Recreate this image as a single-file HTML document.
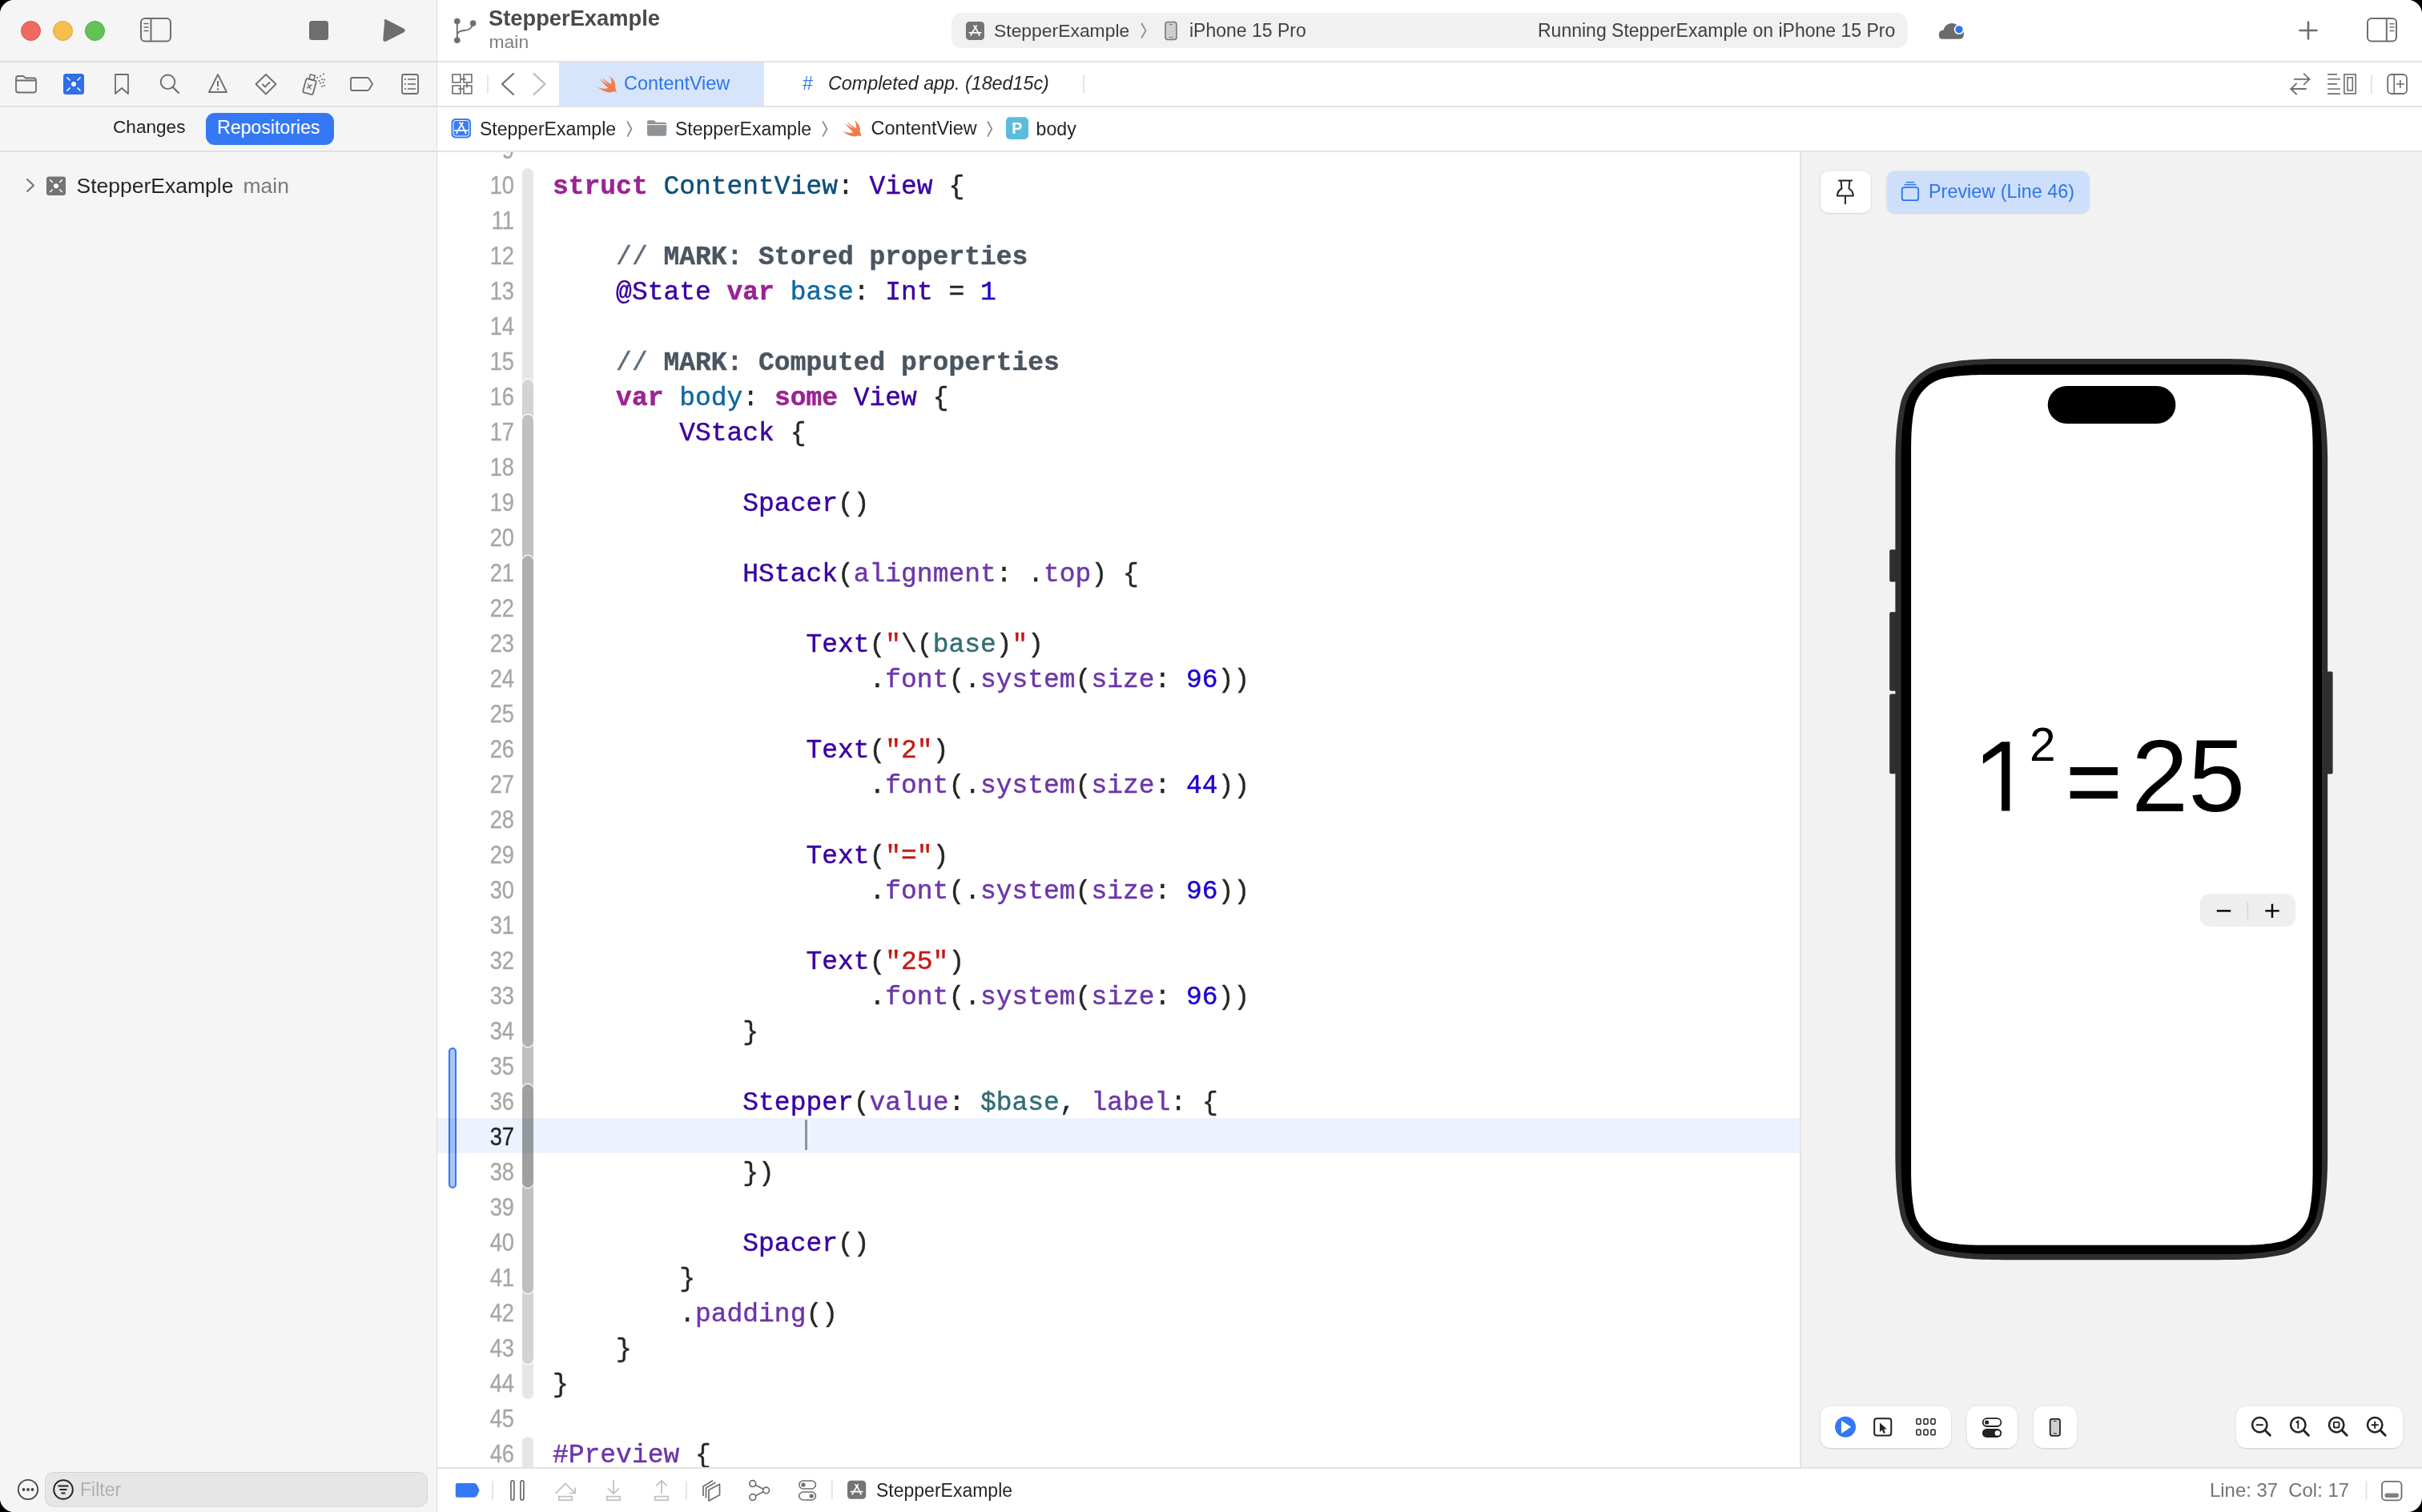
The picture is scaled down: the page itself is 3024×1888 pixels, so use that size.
<!DOCTYPE html>
<html><head><meta charset="utf-8"><title>Xcode</title>
<style>
html,body{margin:0;padding:0;width:3024px;height:1888px;overflow:hidden;background:#000;}
#win{position:absolute;left:0;top:0;width:3024px;height:1888px;border-radius:18px;overflow:hidden;background:#fff;font-family:"Liberation Sans",sans-serif;}
.a{position:absolute;}
.t{position:absolute;white-space:pre;line-height:1;}
svg{position:absolute;overflow:visible;}
.code{position:absolute;left:144px;white-space:pre;font-family:"Liberation Mono",monospace;font-size:32.96px;line-height:44px;height:44px;color:#262626;-webkit-text-stroke:0.45px currentColor;}
.ln{position:absolute;left:0px;width:96px;text-align:right;font-family:"Liberation Sans",sans-serif;font-size:31px;line-height:44px;height:44px;color:#a6a6a6;-webkit-text-stroke:0.35px currentColor;transform:scaleX(0.88);transform-origin:96px 0;}
.k{color:#9b2393;font-weight:bold}
.td{color:#0b4f79}
.od{color:#0f68a0}
.ot{color:#3900a0}
.of{color:#6c36a9}
.ov{color:#326d74}
.n{color:#1c00cf}
.s{color:#c41a16}
.c{color:#5d6c79}
.m{color:#4a5561;font-weight:bold}
</style></head><body><div id="win">

<div class="a" style="left:0;top:0;width:545px;height:1888px;background:#f5f5f5"></div>
<div class="a" style="left:545px;top:0;width:1px;height:1888px;background:#dedede"></div>
<div class="a" style="left:0;top:76px;width:545px;height:2px;background:#e0e0e0"></div>
<div class="a" style="left:0;top:132px;width:545px;height:2px;background:#e0e0e0"></div>
<div class="a" style="left:0;top:188px;width:545px;height:2px;background:#e0e0e0"></div>
<div class="a" style="left:26px;top:26px;width:23px;height:23px;border-radius:50%;background:#ee6a5f;border:0.5px solid #d9534a"></div>
<div class="a" style="left:66px;top:26px;width:23px;height:23px;border-radius:50%;background:#f5bf4f;border:0.5px solid #d9a33d"></div>
<div class="a" style="left:106px;top:26px;width:23px;height:23px;border-radius:50%;background:#61c555;border:0.5px solid #4fa944"></div>
<div class="a" style="left:546px;top:0;width:2478px;height:76px;background:#fff"></div>
<div class="a" style="left:546px;top:76px;width:2478px;height:2px;background:#e3e3e3"></div>
<div class="a" style="left:546px;top:132px;width:2478px;height:2px;background:#e3e3e3"></div>
<div class="a" style="left:546px;top:188px;width:2478px;height:2px;background:#e3e3e3"></div>
<div class="a" style="left:546px;top:190px;width:1701px;height:1642px;background:#fff;overflow:hidden">
<div class="a" style="left:106px;top:19.90px;width:14px;height:1536.70px;background:#e6e6e6;border-radius:7px;box-shadow:0 0 0 1.5px rgba(255,255,255,0.85)"></div>
<div class="a" style="left:106px;top:283.90px;width:14px;height:1228.70px;background:#d3d3d3;border-radius:7px;box-shadow:0 0 0 1.5px rgba(255,255,255,0.85)"></div>
<div class="a" style="left:106px;top:327.90px;width:14px;height:1096.70px;background:#c0c0c0;border-radius:7px;box-shadow:0 0 0 1.5px rgba(255,255,255,0.85)"></div>
<div class="a" style="left:106px;top:503.90px;width:14px;height:612.70px;background:#afafaf;border-radius:7px;box-shadow:0 0 0 1.5px rgba(255,255,255,0.85)"></div>
<div class="a" style="left:106px;top:1163.90px;width:14px;height:128.70px;background:#a0a0a0;border-radius:7px;box-shadow:0 0 0 1.5px rgba(255,255,255,0.85)"></div>
<div class="a" style="left:106px;top:1603.90px;width:14px;height:656.70px;background:#e6e6e6;border-radius:7px;box-shadow:0 0 0 1.5px rgba(255,255,255,0.85)"></div>
<div class="ln" style="top:-23.90px;color:#a6a6a6">9</div>
<div class="ln" style="top:20.10px;color:#a6a6a6">10</div>
<div class="ln" style="top:64.10px;color:#a6a6a6">11</div>
<div class="ln" style="top:108.10px;color:#a6a6a6">12</div>
<div class="ln" style="top:152.10px;color:#a6a6a6">13</div>
<div class="ln" style="top:196.10px;color:#a6a6a6">14</div>
<div class="ln" style="top:240.10px;color:#a6a6a6">15</div>
<div class="ln" style="top:284.10px;color:#a6a6a6">16</div>
<div class="ln" style="top:328.10px;color:#a6a6a6">17</div>
<div class="ln" style="top:372.10px;color:#a6a6a6">18</div>
<div class="ln" style="top:416.10px;color:#a6a6a6">19</div>
<div class="ln" style="top:460.10px;color:#a6a6a6">20</div>
<div class="ln" style="top:504.10px;color:#a6a6a6">21</div>
<div class="ln" style="top:548.10px;color:#a6a6a6">22</div>
<div class="ln" style="top:592.10px;color:#a6a6a6">23</div>
<div class="ln" style="top:636.10px;color:#a6a6a6">24</div>
<div class="ln" style="top:680.10px;color:#a6a6a6">25</div>
<div class="ln" style="top:724.10px;color:#a6a6a6">26</div>
<div class="ln" style="top:768.10px;color:#a6a6a6">27</div>
<div class="ln" style="top:812.10px;color:#a6a6a6">28</div>
<div class="ln" style="top:856.10px;color:#a6a6a6">29</div>
<div class="ln" style="top:900.10px;color:#a6a6a6">30</div>
<div class="ln" style="top:944.10px;color:#a6a6a6">31</div>
<div class="ln" style="top:988.10px;color:#a6a6a6">32</div>
<div class="ln" style="top:1032.10px;color:#a6a6a6">33</div>
<div class="ln" style="top:1076.10px;color:#a6a6a6">34</div>
<div class="ln" style="top:1120.10px;color:#a6a6a6">35</div>
<div class="ln" style="top:1164.10px;color:#a6a6a6">36</div>
<div class="ln" style="top:1208.10px;color:#222">37</div>
<div class="ln" style="top:1252.10px;color:#a6a6a6">38</div>
<div class="ln" style="top:1296.10px;color:#a6a6a6">39</div>
<div class="ln" style="top:1340.10px;color:#a6a6a6">40</div>
<div class="ln" style="top:1384.10px;color:#a6a6a6">41</div>
<div class="ln" style="top:1428.10px;color:#a6a6a6">42</div>
<div class="ln" style="top:1472.10px;color:#a6a6a6">43</div>
<div class="ln" style="top:1516.10px;color:#a6a6a6">44</div>
<div class="ln" style="top:1560.10px;color:#a6a6a6">45</div>
<div class="ln" style="top:1604.10px;color:#a6a6a6">46</div>
<div class="code" style="top:21.63px"><span class="k">struct</span> <span class="td">ContentView</span>: <span class="ot">View</span> {</div>
<div class="code" style="top:109.63px">    <span class="c">// </span><span class="m">MARK: Stored properties</span></div>
<div class="code" style="top:153.63px">    <span class="ot">@State</span> <span class="k">var</span> <span class="od">base</span>: <span class="ot">Int</span> = <span class="n">1</span></div>
<div class="code" style="top:241.63px">    <span class="c">// </span><span class="m">MARK: Computed properties</span></div>
<div class="code" style="top:285.63px">    <span class="k">var</span> <span class="od">body</span>: <span class="k">some</span> <span class="ot">View</span> {</div>
<div class="code" style="top:329.63px">        <span class="ot">VStack</span> {</div>
<div class="code" style="top:417.63px">            <span class="ot">Spacer</span>()</div>
<div class="code" style="top:505.63px">            <span class="ot">HStack</span>(<span class="of">alignment</span>: .<span class="of">top</span>) {</div>
<div class="code" style="top:593.63px">                <span class="ot">Text</span>(<span class="s">&quot;</span>\(<span class="ov">base</span>)<span class="s">&quot;</span>)</div>
<div class="code" style="top:637.63px">                    .<span class="of">font</span>(.<span class="of">system</span>(<span class="of">size</span>: <span class="n">96</span>))</div>
<div class="code" style="top:725.63px">                <span class="ot">Text</span>(<span class="s">&quot;2&quot;</span>)</div>
<div class="code" style="top:769.63px">                    .<span class="of">font</span>(.<span class="of">system</span>(<span class="of">size</span>: <span class="n">44</span>))</div>
<div class="code" style="top:857.63px">                <span class="ot">Text</span>(<span class="s">&quot;=&quot;</span>)</div>
<div class="code" style="top:901.63px">                    .<span class="of">font</span>(.<span class="of">system</span>(<span class="of">size</span>: <span class="n">96</span>))</div>
<div class="code" style="top:989.63px">                <span class="ot">Text</span>(<span class="s">&quot;25&quot;</span>)</div>
<div class="code" style="top:1033.63px">                    .<span class="of">font</span>(.<span class="of">system</span>(<span class="of">size</span>: <span class="n">96</span>))</div>
<div class="code" style="top:1077.63px">            }</div>
<div class="code" style="top:1165.63px">            <span class="ot">Stepper</span>(<span class="of">value</span>: <span class="ov">$base</span>, <span class="of">label</span>: {</div>
<div class="code" style="top:1253.63px">            })</div>
<div class="code" style="top:1341.63px">            <span class="ot">Spacer</span>()</div>
<div class="code" style="top:1385.63px">        }</div>
<div class="code" style="top:1429.63px">        .<span class="of">padding</span>()</div>
<div class="code" style="top:1473.63px">    }</div>
<div class="code" style="top:1517.63px">}</div>
<div class="code" style="top:1605.63px"><span class="of">#Preview</span> {</div>
<div class="a" style="left:14px;top:1118px;width:6px;height:172px;background:#aac8f8;border:2px solid #3478f6;border-radius:5px"></div>
<div class="a" style="left:459px;top:1208px;width:3px;height:38px;background:#9a9a9a"></div>
<div class="a" style="left:0;top:1206.10px;width:1702px;height:44.00px;background:#ecf3fe;mix-blend-mode:multiply"></div>
</div>
<div class="a" style="left:2247px;top:190px;width:777px;height:1642px;background:#f2f2f2"></div>
<div class="a" style="left:2247px;top:190px;width:2px;height:1642px;background:#e4e4e4"></div>
<div class="a" style="left:546px;top:1832px;width:2478px;height:2px;background:#e3e3e3"></div>
<div class="a" style="left:698px;top:78px;width:256px;height:54px;background:#d6e5fb"></div>
<svg width="3024" height="1888" viewBox="0 0 3024 1888" style="left:0;top:0"><defs><filter id="sh" x="-20%" y="-40%" width="140%" height="180%"><feDropShadow dx="0" dy="0.5" stdDeviation="1.2" flood-color="#000" flood-opacity="0.22"/></filter></defs>
<rect x="176" y="23" width="37" height="28.5" rx="5" fill="none" stroke="#6e6e6e" stroke-width="2"/>
<line x1="188.5" y1="23" x2="188.5" y2="51.5" stroke="#6e6e6e" stroke-width="2"/>
<line x1="180" y1="29.5" x2="185" y2="29.5" stroke="#6e6e6e" stroke-width="1.5" stroke-linecap="round"/>
<line x1="180" y1="34" x2="185" y2="34" stroke="#6e6e6e" stroke-width="1.5" stroke-linecap="round"/>
<line x1="180" y1="38.5" x2="185" y2="38.5" stroke="#6e6e6e" stroke-width="1.5" stroke-linecap="round"/>
<rect x="386" y="26" width="24" height="24" rx="3.5" fill="#6e6e6e"/>
<path d="M481 26.5 Q479 24.5 481.5 25 L504 36.5 Q506 38 504 39.5 L481.5 51 Q479 51.5 479 49 Z" fill="#6e6e6e" stroke="#6e6e6e" stroke-width="1.5" stroke-linejoin="round"/>
<path d="M20 98 Q20 95 23 95 L29 95 L32 97.5 L42 97.5 Q45 97.5 45 100.5 L45 112.5 Q45 115.5 42 115.5 L23 115.5 Q20 115.5 20 112.5 Z" fill="none" stroke="#6e6e6e" stroke-width="1.8" stroke-linejoin="round"/>
<line x1="20" y1="100.5" x2="45" y2="100.5" stroke="#6e6e6e" stroke-width="1.8"/>
<rect x="79" y="92" width="26" height="26" rx="3.5" fill="#2f6fe8"/>
<circle cx="92" cy="105" r="3" fill="#fff"/>
<line x1="87.5" y1="100.5" x2="83.5" y2="96.5" stroke="#fff" stroke-width="1.6"/>
<line x1="96.5" y1="100.5" x2="100.5" y2="96.5" stroke="#fff" stroke-width="1.6"/>
<line x1="87.5" y1="109.5" x2="83.5" y2="113.5" stroke="#fff" stroke-width="1.6"/>
<line x1="96.5" y1="109.5" x2="100.5" y2="113.5" stroke="#fff" stroke-width="1.6"/>
<path d="M144 93 L160 93 L160 117 L152 110 L144 117 Z" fill="none" stroke="#6e6e6e" stroke-width="1.8" stroke-linejoin="round"/>
<circle cx="209.5" cy="102.3" r="8.8" fill="none" stroke="#6e6e6e" stroke-width="1.9"/>
<line x1="216" y1="109" x2="223" y2="116" stroke="#6e6e6e" stroke-width="2.2" stroke-linecap="round"/>
<path d="M272 93 L283 115 L261 115 Z" fill="none" stroke="#6e6e6e" stroke-width="1.8" stroke-linejoin="round"/>
<line x1="272" y1="101" x2="272" y2="108" stroke="#6e6e6e" stroke-width="2"/><circle cx="272" cy="111.5" r="1.2" fill="#6e6e6e"/>
<path d="M332 93 L344.5 105 L332 117.5 L319.5 105 Z" fill="none" stroke="#6e6e6e" stroke-width="1.8" stroke-linejoin="round"/>
<path d="M327.5 105 L331 108.5 L337 102.5" fill="none" stroke="#6e6e6e" stroke-width="1.8"/>
<g transform="rotate(15 386 108)"><rect x="380" y="99" width="13" height="18" rx="2" fill="none" stroke="#6e6e6e" stroke-width="1.8"/><rect x="383.5" y="93" width="6" height="6" fill="none" stroke="#6e6e6e" stroke-width="1.6"/><path d="M383.5 105 L389 111 M389 105 L383.5 111" stroke="#6e6e6e" stroke-width="1.4"/></g>
<rect x="395.1" y="96.1" width="1.8" height="1.8" fill="#6e6e6e"/>
<rect x="399.1" y="94.1" width="1.8" height="1.8" fill="#6e6e6e"/>
<rect x="403.1" y="91.6" width="1.8" height="1.8" fill="#6e6e6e"/>
<rect x="397.6" y="100.1" width="1.8" height="1.8" fill="#6e6e6e"/>
<rect x="401.1" y="98.1" width="1.8" height="1.8" fill="#6e6e6e"/>
<rect x="404.1" y="98.6" width="1.8" height="1.8" fill="#6e6e6e"/>
<rect x="399.1" y="103.1" width="1.8" height="1.8" fill="#6e6e6e"/>
<rect x="402.6" y="102.1" width="1.8" height="1.8" fill="#6e6e6e"/>
<rect x="401.1" y="107.1" width="1.8" height="1.8" fill="#6e6e6e"/>
<rect x="404.1" y="106.1" width="1.8" height="1.8" fill="#6e6e6e"/>
<path d="M440 97 L458 97 Q460 97 461 98.5 L465 105 L461 111.5 Q460 113 458 113 L440 113 Q438 113 438 111 L438 99 Q438 97 440 97 Z" fill="none" stroke="#6e6e6e" stroke-width="1.8" stroke-linejoin="round"/>
<rect x="502" y="93" width="20" height="24" rx="2.5" fill="none" stroke="#6e6e6e" stroke-width="1.8"/>
<rect x="505" y="98.1" width="1.8" height="1.8" fill="#6e6e6e"/><line x1="509" y1="99" x2="519" y2="99" stroke="#6e6e6e" stroke-width="1.6"/>
<rect x="505" y="104.1" width="1.8" height="1.8" fill="#6e6e6e"/><line x1="509" y1="105" x2="519" y2="105" stroke="#6e6e6e" stroke-width="1.6"/>
<rect x="505" y="110.1" width="1.8" height="1.8" fill="#6e6e6e"/><line x1="509" y1="111" x2="519" y2="111" stroke="#6e6e6e" stroke-width="1.6"/>
<path d="M34 224 L42 231.5 L34 239" fill="none" stroke="#6e6e6e" stroke-width="1.9" stroke-linecap="round" stroke-linejoin="round"/>
<rect x="58" y="220.5" width="24" height="23.5" rx="3" fill="#747474"/>
<circle cx="70" cy="232.2" r="3" fill="#fff"/>
<line x1="65.7" y1="227.89999999999998" x2="62.2" y2="224.39999999999998" stroke="#fff" stroke-width="1.5"/>
<line x1="74.3" y1="227.89999999999998" x2="77.8" y2="224.39999999999998" stroke="#fff" stroke-width="1.5"/>
<line x1="65.7" y1="236.5" x2="62.2" y2="240.0" stroke="#fff" stroke-width="1.5"/>
<line x1="74.3" y1="236.5" x2="77.8" y2="240.0" stroke="#fff" stroke-width="1.5"/>
<circle cx="35" cy="1860" r="12.2" fill="none" stroke="#444" stroke-width="1.8"/>
<circle cx="29.5" cy="1860" r="1.9" fill="#444"/>
<circle cx="35" cy="1860" r="1.9" fill="#444"/>
<circle cx="40.5" cy="1860" r="1.9" fill="#444"/>
<rect x="56.5" y="1838.5" width="477" height="42.5" rx="10" fill="#e6e6e6" stroke="#d3d3d3" stroke-width="1"/>
<circle cx="79" cy="1860" r="11.8" fill="none" stroke="#222" stroke-width="2"/>
<line x1="72.5" y1="1855.5" x2="85.5" y2="1855.5" stroke="#222" stroke-width="1.8"/><line x1="74.5" y1="1860" x2="83.5" y2="1860" stroke="#222" stroke-width="1.8"/><line x1="76.5" y1="1864.5" x2="81.5" y2="1864.5" stroke="#222" stroke-width="1.8"/>
<circle cx="570.8" cy="26.6" r="3.8" fill="#6e6e6e"/><circle cx="590.6" cy="29.1" r="3.8" fill="#6e6e6e"/><circle cx="570.8" cy="50.2" r="3.8" fill="#6e6e6e"/>
<path d="M570.8 26.6 L570.8 50.2 M570.8 43 Q572 38.5 580 38 Q589 37.5 590.6 29.1" fill="none" stroke="#6e6e6e" stroke-width="1.9"/>
<rect x="1188" y="16" width="1193.5" height="44" rx="12" fill="#f1f1f1"/>
<rect x="1206" y="27" width="23" height="23" rx="4.5" fill="#747474"/>
<g transform="translate(1217.5 38.5) scale(0.92)" fill="none" stroke="#fff" stroke-width="1.8" stroke-linecap="round"><path d="M-1.9 -7 L0 -4.8 M1.9 -7 L-3.9 2.4 M-4.9 4.4 L-5.9 6.2 M1.1 -3.5 L5.8 6.2 M-7.8 2.6 L7.8 2.6"/></g>
<path d="M1425.5 29.5 L1430.5 38.2 L1425.5 47" fill="none" stroke="#8a8a8a" stroke-width="1.7" stroke-linecap="round"/>
<rect x="1455" y="27.5" width="14" height="22" rx="3" fill="#cfcfcf" stroke="#777" stroke-width="1.6"/>
<line x1="1460" y1="30.5" x2="1464" y2="30.5" stroke="#777" stroke-width="1"/><line x1="1459.5" y1="46.5" x2="1464.5" y2="46.5" stroke="#777" stroke-width="1"/>
<path d="M2425 48.8 Q2420.8 48.8 2420.8 43.5 Q2420.8 38 2426.5 37.5 Q2428.5 29.5 2437 29 Q2444 29 2446 35.5 Q2452 36 2452 42.5 Q2452 48.8 2446 48.8 Z" fill="#6b6b6b"/>
<circle cx="2446" cy="36.8" r="6.2" fill="#fff"/><circle cx="2446" cy="36.8" r="4.6" fill="#2b73f0"/>
<path d="M2882 27.5 L2882 48.5 M2871.5 38 L2892.5 38" stroke="#6e6e6e" stroke-width="2.6" stroke-linecap="round"/>
<rect x="2956" y="23" width="36" height="28.5" rx="5" fill="none" stroke="#6e6e6e" stroke-width="2"/>
<line x1="2979.8" y1="23" x2="2979.8" y2="51.5" stroke="#6e6e6e" stroke-width="2"/>
<line x1="2984" y1="29.7" x2="2989" y2="29.7" stroke="#6e6e6e" stroke-width="1.5" stroke-linecap="round"/>
<line x1="2984" y1="34.1" x2="2989" y2="34.1" stroke="#6e6e6e" stroke-width="1.5" stroke-linecap="round"/>
<line x1="2984" y1="38.5" x2="2989" y2="38.5" stroke="#6e6e6e" stroke-width="1.5" stroke-linecap="round"/>
<rect x="565" y="93" width="9.9" height="9.9" fill="none" stroke="#6e6e6e" stroke-width="1.6"/>
<rect x="579" y="93" width="9.9" height="9.9" fill="none" stroke="#6e6e6e" stroke-width="1.6"/>
<rect x="565" y="107" width="9.9" height="9.9" fill="none" stroke="#6e6e6e" stroke-width="1.6"/>
<rect x="579" y="107" width="9.9" height="9.9" fill="none" stroke="#6e6e6e" stroke-width="1.6"/>
<path d="M575.6 98.9 L581.7 98.9 M583 103.3 L583 109.6 M572.2 111 L578.5 111" stroke="#6e6e6e" stroke-width="1.6"/>
<line x1="609" y1="93.5" x2="609" y2="116.5" stroke="#dcdcdc" stroke-width="1.5"/>
<path d="M641 92 L627 105 L641 118" fill="none" stroke="#6e6e6e" stroke-width="2.1" stroke-linecap="round" stroke-linejoin="round"/>
<path d="M666.5 92 L680.5 105 L666.5 118" fill="none" stroke="#b8b8b8" stroke-width="2.1" stroke-linecap="round" stroke-linejoin="round"/>
<g transform="translate(0.40 0.10)"><path fill="#ef7d4e" d="M760.6 95 C764.5 97.5 768.5 102 767.7 108.5 C767.5 110 769.5 113 769.3 115.3 C768 114.2 766.5 114 765 114.4 C761 116.3 754 115.5 745.6 108.4 C750.5 111.2 756.5 111 759 109.7 C755.5 106.5 751 102 748.4 98.4 C753 101.8 757.5 104.5 759.5 105.8 C756 102.5 753 99.5 751.6 97.4 C756 100.5 760 103.5 762.3 105 C763.5 102 763 98 760.6 95 Z"/></g>
<line x1="1353" y1="93.5" x2="1353" y2="116.5" stroke="#dcdcdc" stroke-width="1.5"/>
<path d="M2865 98.8 L2883.5 98.8 M2876.8 92.3 L2883.5 98.8 L2876.8 105.3 M2878.8 111 L2860.3 111 M2867 104.6 L2860.3 111 L2867 117.4" fill="none" stroke="#6e6e6e" stroke-width="1.8" stroke-linecap="square"/>
<line x1="2906.2" y1="92.9" x2="2917.9" y2="92.9" stroke="#6e6e6e" stroke-width="1.6"/>
<line x1="2906.2" y1="98.8" x2="2921.9" y2="98.8" stroke="#6e6e6e" stroke-width="1.6"/>
<line x1="2906.2" y1="104.9" x2="2917.9" y2="104.9" stroke="#6e6e6e" stroke-width="1.6"/>
<line x1="2906.2" y1="111" x2="2921.9" y2="111" stroke="#6e6e6e" stroke-width="1.6"/>
<line x1="2906.2" y1="117.1" x2="2921.9" y2="117.1" stroke="#6e6e6e" stroke-width="1.6"/>
<rect x="2926.9" y="92.9" width="14.3" height="24" fill="none" stroke="#6e6e6e" stroke-width="1.6"/>
<rect x="2931" y="96.9" width="6.3" height="16.1" fill="none" stroke="#6e6e6e" stroke-width="1.6"/>
<line x1="2961" y1="93.5" x2="2961" y2="117" stroke="#dcdcdc" stroke-width="1.5"/>
<rect x="2981.2" y="93" width="23.8" height="24" rx="4.5" fill="none" stroke="#6e6e6e" stroke-width="1.8"/>
<line x1="2989.2" y1="93" x2="2989.2" y2="117" stroke="#6e6e6e" stroke-width="1.6"/>
<path d="M2996.9 100 L2996.9 110 M2991.9 105 L3001.9 105" stroke="#6e6e6e" stroke-width="1.6"/>
<rect x="563.5" y="148" width="24.5" height="24.5" rx="5" fill="#3b7cf0"/>
<rect x="566" y="150.5" width="19.5" height="19.5" rx="3" fill="none" stroke="#fff" stroke-width="1"/>
<g transform="translate(575.8 160.2) scale(1.0)" fill="none" stroke="#fff" stroke-width="1.8" stroke-linecap="round"><path d="M-1.9 -7 L0 -4.8 M1.9 -7 L-3.9 2.4 M-4.9 4.4 L-5.9 6.2 M1.1 -3.5 L5.8 6.2 M-7.8 2.6 L7.8 2.6"/></g>
<path d="M783.5 152 L788.5 161 L783.5 170" fill="none" stroke="#8a8a8a" stroke-width="1.7" stroke-linecap="round"/>
<path d="M808 152.5 Q808 150.3 810.2 150.3 L816.5 150.3 L819 152.8 L830 152.8 Q832.2 152.8 832.2 155 L832.2 167.5 Q832.2 169.7 830 169.7 L810.2 169.7 Q808 169.7 808 167.5 Z" fill="#8e9398"/>
<line x1="808" y1="155.6" x2="832.2" y2="155.6" stroke="#fff" stroke-width="1"/>
<path d="M1027.5 152 L1032.5 161 L1027.5 170" fill="none" stroke="#8a8a8a" stroke-width="1.7" stroke-linecap="round"/>
<g transform="translate(306.10 55.20)"><path fill="#ef7d4e" d="M760.6 95 C764.5 97.5 768.5 102 767.7 108.5 C767.5 110 769.5 113 769.3 115.3 C768 114.2 766.5 114 765 114.4 C761 116.3 754 115.5 745.6 108.4 C750.5 111.2 756.5 111 759 109.7 C755.5 106.5 751 102 748.4 98.4 C753 101.8 757.5 104.5 759.5 105.8 C756 102.5 753 99.5 751.6 97.4 C756 100.5 760 103.5 762.3 105 C763.5 102 763 98 760.6 95 Z"/></g>
<path d="M1233.3 152 L1238.3 161 L1233.3 170" fill="none" stroke="#8a8a8a" stroke-width="1.7" stroke-linecap="round"/>
<rect x="1256" y="146.2" width="28" height="27.7" rx="5" fill="#5bbdd9"/>
<path d="M571 1852 L592 1852 Q594 1852 595.5 1854 L598.6 1861 L595.5 1868 Q594 1869.8 592 1869.8 L571 1869.8 Q568.8 1869.8 568.8 1867.5 L568.8 1854.3 Q568.8 1852 571 1852 Z" fill="#3478f6"/>
<line x1="614.8" y1="1849" x2="614.8" y2="1872.5" stroke="#dcdcdc" stroke-width="1.5"/>
<rect x="637.9" y="1848.9" width="4" height="24.1" rx="2" fill="none" stroke="#6e6e6e" stroke-width="1.7"/><rect x="649.9" y="1848.9" width="4" height="24.1" rx="2" fill="none" stroke="#6e6e6e" stroke-width="1.7"/>
<path d="M693.5 1865 L706 1852.5 L718 1864.5 M718 1857.5 L718 1864.5 L711 1864.5" fill="none" stroke="#bdbdbd" stroke-width="1.7"/><rect x="697.8" y="1868.6" width="16.3" height="4.6" fill="none" stroke="#bdbdbd" stroke-width="1.6"/>
<path d="M766 1848.3 L766 1865 M759 1858.5 L766 1865 L773 1858.5" fill="none" stroke="#bdbdbd" stroke-width="1.7"/><rect x="757.8" y="1868.6" width="16.3" height="4.6" fill="none" stroke="#bdbdbd" stroke-width="1.6"/>
<path d="M826 1865.5 L826 1849 M819 1855.5 L826 1849 L833 1855.5" fill="none" stroke="#bdbdbd" stroke-width="1.7"/><rect x="817.8" y="1868.6" width="16.3" height="4.6" fill="none" stroke="#bdbdbd" stroke-width="1.6"/>
<line x1="856.9" y1="1849" x2="856.9" y2="1872.3" stroke="#dcdcdc" stroke-width="1.5"/>
<path d="M878 1868 L878 1856 L890 1848.8 M881.5 1870.5 L881.5 1858 L893.5 1851 M885 1874 L885 1860.5 L898.5 1853.3 L898.5 1866.8 Z" fill="none" stroke="#6e6e6e" stroke-width="1.7" stroke-linejoin="round"/>
<circle cx="939.8" cy="1852.6" r="3.9" fill="none" stroke="#6e6e6e" stroke-width="1.7"/><circle cx="939.8" cy="1869.6" r="3.9" fill="none" stroke="#6e6e6e" stroke-width="1.7"/><circle cx="956.6" cy="1861" r="3.9" fill="none" stroke="#6e6e6e" stroke-width="1.7"/><path d="M943.3 1854.5 L953 1859.3 M943.3 1867.7 L953 1862.8" stroke="#6e6e6e" stroke-width="1.7"/>
<rect x="997.8" y="1849" width="20.6" height="10" rx="5" fill="none" stroke="#6e6e6e" stroke-width="1.6"/><circle cx="1003" cy="1854" r="2.6" fill="#6e6e6e"/><rect x="997.8" y="1863" width="20.6" height="10" rx="5" fill="none" stroke="#6e6e6e" stroke-width="1.6"/><circle cx="1013.2" cy="1868" r="2.6" fill="#6e6e6e"/>
<line x1="1038.9" y1="1849" x2="1038.9" y2="1872.3" stroke="#dcdcdc" stroke-width="1.5"/>
<rect x="1058" y="1848.7" width="23.2" height="23.1" rx="4.5" fill="#747474"/>
<g transform="translate(1069.6 1860.2) scale(0.92)" fill="none" stroke="#fff" stroke-width="1.8" stroke-linecap="round"><path d="M-1.9 -7 L0 -4.8 M1.9 -7 L-3.9 2.4 M-4.9 4.4 L-5.9 6.2 M1.1 -3.5 L5.8 6.2 M-7.8 2.6 L7.8 2.6"/></g>
<line x1="2954.5" y1="1849" x2="2954.5" y2="1872.5" stroke="#dcdcdc" stroke-width="1.5"/>
<rect x="2974" y="1849.8" width="24.5" height="23.5" rx="4.5" fill="none" stroke="#6e6e6e" stroke-width="1.8"/><rect x="2977.5" y="1864.5" width="17.5" height="5.5" rx="2.5" fill="#808080"/>
<rect x="2273" y="213.7" width="62.8" height="52" rx="10" fill="#fff" filter="url(#sh)"/>
<path d="M2296 225.5 L2312 225.5 M2298.5 225.5 L2299.5 235.5 Q2294 238.5 2294 244.5 L2313.8 244.5 Q2313.8 238.5 2308.5 235.5 L2309.5 225.5 M2303.9 244.5 L2303.9 254.3" fill="none" stroke="#222" stroke-width="2" stroke-linecap="round" stroke-linejoin="round"/>
<rect x="2355.9" y="213.7" width="252.6" height="52" rx="10" fill="#cddffb" filter="url(#sh)"/>
<rect x="2374.8" y="233.8" width="20.4" height="16.4" rx="3" fill="none" stroke="#2e74ea" stroke-width="1.8"/>
<line x1="2377.5" y1="230.6" x2="2392.5" y2="230.6" stroke="#2e74ea" stroke-width="1.4"/><line x1="2379.5" y1="227.6" x2="2390.5" y2="227.6" stroke="#2e74ea" stroke-width="1.4"/>
<rect x="2359.2" y="686.2" width="9" height="40.3" rx="2" fill="#2f2f2f"/>
<rect x="2359.2" y="764.2" width="9" height="98.5" rx="2" fill="#2f2f2f"/>
<rect x="2359.2" y="866.6" width="9" height="99.7" rx="2" fill="#2f2f2f"/>
<rect x="2904.5" y="838.6" width="8.1" height="128" rx="2" fill="#2f2f2f"/>
<path d="M2500.92 447.90 L2771.68 447.90 C2810.41 447.90 2829.78 450.17 2850.63 454.49 C2873.39 459.87 2894.23 480.71 2899.61 503.47 C2903.93 524.32 2906.20 543.69 2906.20 582.42 L2906.20 1438.68 C2906.20 1477.41 2903.93 1496.78 2899.61 1517.63 C2894.23 1540.39 2873.39 1561.23 2850.63 1566.61 C2829.78 1570.93 2810.41 1573.20 2771.68 1573.20 L2500.92 1573.20 C2462.19 1573.20 2442.82 1570.93 2421.97 1566.61 C2399.21 1561.23 2378.37 1540.39 2372.99 1517.63 C2368.67 1496.78 2366.40 1477.41 2366.40 1438.68 L2366.40 582.42 C2366.40 543.69 2368.67 524.32 2372.99 503.47 C2378.37 480.71 2399.21 459.87 2421.97 454.49 C2442.82 450.17 2462.19 447.90 2500.92 447.90 Z" fill="#2e2e2e"/>
<path d="M2495.89 455.00 L2776.71 455.00 C2811.92 455.00 2829.53 457.06 2848.48 460.99 C2869.17 465.88 2888.12 484.83 2893.01 505.52 C2896.94 524.47 2899.00 542.08 2899.00 577.29 L2899.00 1443.81 C2899.00 1479.02 2896.94 1496.63 2893.01 1515.58 C2888.12 1536.27 2869.17 1555.22 2848.48 1560.11 C2829.53 1564.04 2811.92 1566.10 2776.71 1566.10 L2495.89 1566.10 C2460.68 1566.10 2443.07 1564.04 2424.12 1560.11 C2403.43 1555.22 2384.48 1536.27 2379.59 1515.58 C2375.66 1496.63 2373.60 1479.02 2373.60 1443.81 L2373.60 577.29 C2373.60 542.08 2375.66 524.47 2379.59 505.52 C2384.48 484.83 2403.43 465.88 2424.12 460.99 C2443.07 457.06 2460.68 455.00 2495.89 455.00 Z" fill="#000"/>
<path d="M2480.88 468.00 L2792.82 468.00 C2820.11 468.00 2833.76 469.60 2848.45 472.64 C2864.49 476.43 2879.17 491.11 2882.96 507.15 C2886.00 521.84 2887.60 535.49 2887.60 562.78 L2887.60 1460.02 C2887.60 1487.31 2886.00 1500.96 2882.96 1515.65 C2879.17 1531.69 2864.49 1546.37 2848.45 1550.16 C2833.76 1553.20 2820.11 1554.80 2792.82 1554.80 L2480.88 1554.80 C2453.59 1554.80 2439.94 1553.20 2425.25 1550.16 C2409.21 1546.37 2394.53 1531.69 2390.74 1515.65 C2387.70 1500.96 2386.10 1487.31 2386.10 1460.02 L2386.10 562.78 C2386.10 535.49 2387.70 521.84 2390.74 507.15 C2394.53 491.11 2409.21 476.43 2425.25 472.64 C2439.94 469.60 2453.59 468.00 2480.88 468.00 Z" fill="#fff"/>
<rect x="2556.8" y="482" width="159.6" height="47" rx="23.5" fill="#000"/>
<rect x="2746.8" y="1116.4" width="119.2" height="40.7" rx="12" fill="#eeeeef"/>
<line x1="2767.8" y1="1137.4" x2="2785.2" y2="1137.4" stroke="#000" stroke-width="2.4"/>
<path d="M2828.3 1137.4 L2845.7 1137.4 M2837 1128.7 L2837 1146.1" stroke="#000" stroke-width="2.4"/>
<line x1="2806.4" y1="1126" x2="2806.4" y2="1148" stroke="#d6d6d6" stroke-width="1.5"/>
<rect x="2273" y="1755.8" width="163.0" height="52.2" rx="13" fill="#fff" filter="url(#sh)"/>
<rect x="2455.8" y="1755.8" width="62.9" height="52.2" rx="13" fill="#fff" filter="url(#sh)"/>
<rect x="2538.9" y="1755.8" width="54.2" height="52.2" rx="13" fill="#fff" filter="url(#sh)"/>
<rect x="2791.9" y="1755.8" width="208.2" height="52.2" rx="13" fill="#fff" filter="url(#sh)"/>
<circle cx="2304.1" cy="1781.8" r="13" fill="#3478f6"/><path d="M2299.5 1774.5 L2310.5 1781.8 L2299.5 1789.1 Z" fill="#fff" stroke="#fff" stroke-width="1" stroke-linejoin="round"/>
<rect x="2340.2" y="1771.3" width="21.1" height="21.1" rx="3" fill="none" stroke="#222" stroke-width="2"/><path d="M2347 1776.5 L2347 1788 L2349.8 1785.5 L2352 1790 L2354 1789 L2352 1784.8 L2355.8 1784.5 Z" fill="#222"/>
<rect x="2392.9" y="1771.8" width="5.2" height="6.4" rx="1.2" fill="none" stroke="#222" stroke-width="1.5"/>
<rect x="2392.9" y="1785.3" width="5.2" height="6.4" rx="1.2" fill="none" stroke="#222" stroke-width="1.5"/>
<rect x="2401.9" y="1771.8" width="5.2" height="6.4" rx="1.2" fill="none" stroke="#222" stroke-width="1.5"/>
<rect x="2401.9" y="1785.3" width="5.2" height="6.4" rx="1.2" fill="none" stroke="#222" stroke-width="1.5"/>
<rect x="2410.9" y="1771.8" width="5.2" height="6.4" rx="1.2" fill="none" stroke="#222" stroke-width="1.5"/>
<rect x="2410.9" y="1785.3" width="5.2" height="6.4" rx="1.2" fill="none" stroke="#222" stroke-width="1.5"/>
<rect x="2475.8" y="1771.2" width="22.6" height="9.8" rx="4.9" fill="none" stroke="#222" stroke-width="1.8"/><circle cx="2480.7" cy="1776.1" r="2.6" fill="#222"/>
<rect x="2474.9" y="1784" width="24.3" height="10.9" rx="5.45" fill="#222"/><circle cx="2494" cy="1789.45" r="3.3" fill="#fff"/>
<rect x="2559.7" y="1771.9" width="12.3" height="20.9" rx="2.5" fill="#cfcfcf" stroke="#222" stroke-width="1.8"/><line x1="2564" y1="1774.5" x2="2567.7" y2="1774.5" stroke="#222" stroke-width="1"/><line x1="2563.6" y1="1790" x2="2568" y2="1790" stroke="#222" stroke-width="1"/>
<circle cx="2821.3" cy="1779.2" r="9.2" fill="none" stroke="#222" stroke-width="2.5"/><line x1="2828.1000000000004" y1="1786.0" x2="2834.3" y2="1792.2" stroke="#222" stroke-width="3" stroke-linecap="round"/>
<line x1="2816.8" y1="1779.2" x2="2825.8" y2="1779.2" stroke="#222" stroke-width="1.9"/>
<circle cx="2869.3" cy="1779.2" r="9.2" fill="none" stroke="#222" stroke-width="2.5"/><line x1="2876.1000000000004" y1="1786.0" x2="2882.3" y2="1792.2" stroke="#222" stroke-width="3" stroke-linecap="round"/>
<path d="M2866.8 1776.4 L2869.3 1774.7 L2869.3 1783.7" fill="none" stroke="#222" stroke-width="1.9"/>
<circle cx="2917.2" cy="1779.2" r="9.2" fill="none" stroke="#222" stroke-width="2.5"/><line x1="2924.0" y1="1786.0" x2="2930.2" y2="1792.2" stroke="#222" stroke-width="3" stroke-linecap="round"/>
<rect x="2913.8999999999996" y="1775.9" width="6.6" height="6.6" rx="1" fill="none" stroke="#222" stroke-width="1.9"/>
<circle cx="2965.2" cy="1779.2" r="9.2" fill="none" stroke="#222" stroke-width="2.5"/><line x1="2972.0" y1="1786.0" x2="2978.2" y2="1792.2" stroke="#222" stroke-width="3" stroke-linecap="round"/>
<path d="M2960.7 1779.2 L2969.7 1779.2 M2965.2 1774.7 L2965.2 1783.7" stroke="#222" stroke-width="1.9"/>
</svg>
<div class="t" style="left:95.50px;top:219.27px;font-size:26.5px;color:#262626;font-weight:normal;font-style:normal;font-family:"Liberation Sans",sans-serif;">StepperExample</div>
<div class="t" style="left:303.50px;top:219.27px;font-size:26.5px;color:#7a7a7a;font-weight:normal;font-style:normal;font-family:"Liberation Sans",sans-serif;">main</div>
<div class="t" style="left:141.00px;top:148.47px;font-size:22.6px;color:#222;font-weight:normal;font-style:normal;font-family:"Liberation Sans",sans-serif;">Changes</div>
<div class="a" style="left:257px;top:141px;width:160px;height:39.8px;border-radius:11px;background:#3478f6"></div>
<div class="t" style="left:271.00px;top:148.05px;font-size:23.1px;color:#fff;font-weight:normal;font-style:normal;font-family:"Liberation Sans",sans-serif;">Repositories</div>
<div class="t" style="left:610.00px;top:9.09px;font-size:27.3px;color:#4a4a4a;font-weight:bold;font-style:normal;font-family:"Liberation Sans",sans-serif;">StepperExample</div>
<div class="t" style="left:610.50px;top:40.72px;font-size:22.9px;color:#808080;font-weight:normal;font-style:normal;font-family:"Liberation Sans",sans-serif;">main</div>
<div class="t" style="left:1241.00px;top:26.92px;font-size:22.9px;color:#404040;font-weight:normal;font-style:normal;font-family:"Liberation Sans",sans-serif;">StepperExample</div>
<div class="t" style="left:1485.00px;top:26.83px;font-size:23px;color:#404040;font-weight:normal;font-style:normal;font-family:"Liberation Sans",sans-serif;">iPhone 15 Pro</div>
<div class="t" style="left:1920.00px;top:26.93px;font-size:23px;color:#404040;font-weight:normal;font-style:normal;font-family:"Liberation Sans",sans-serif;">Running StepperExample on iPhone 15 Pro</div>
<div class="t" style="left:779.00px;top:92.99px;font-size:23.4px;color:#2f74e9;font-weight:normal;font-style:normal;font-family:"Liberation Sans",sans-serif;">ContentView</div>
<div class="t" style="left:1002.00px;top:92.99px;font-size:23.4px;color:#3b7bf0;font-weight:normal;font-style:normal;font-family:"Liberation Sans",sans-serif;">#</div>
<div class="t" style="left:1034.00px;top:92.98px;font-size:23.3px;color:#262626;font-weight:normal;font-style:italic;font-family:"Liberation Sans",sans-serif;">Completed app. (18ed15c)</div>
<div class="t" style="left:599.00px;top:149.73px;font-size:23px;color:#262626;font-weight:normal;font-style:normal;font-family:"Liberation Sans",sans-serif;">StepperExample</div>
<div class="t" style="left:843.00px;top:149.73px;font-size:23px;color:#262626;font-weight:normal;font-style:normal;font-family:"Liberation Sans",sans-serif;">StepperExample</div>
<div class="t" style="left:1087.50px;top:149.39px;font-size:23.4px;color:#262626;font-weight:normal;font-style:normal;font-family:"Liberation Sans",sans-serif;">ContentView</div>
<div class="t" style="left:1263.20px;top:150.84px;font-size:19.8px;color:#fff;font-weight:bold;font-style:normal;font-family:"Liberation Sans",sans-serif;">P</div>
<div class="t" style="left:1293.50px;top:149.56px;font-size:23.2px;color:#262626;font-weight:normal;font-style:normal;font-family:"Liberation Sans",sans-serif;">body</div>
<div class="t" style="left:2408.00px;top:228.09px;font-size:23.4px;color:#2e74ea;font-weight:normal;font-style:normal;font-family:"Liberation Sans",sans-serif;">Preview (Line 46)</div>
<div class="t" style="left:1094.00px;top:1849.63px;font-size:23px;color:#262626;font-weight:normal;font-style:normal;font-family:"Liberation Sans",sans-serif;">StepperExample</div>
<div class="t" style="left:2759.00px;top:1848.57px;font-size:23.9px;color:#737373;font-weight:normal;font-style:normal;font-family:"Liberation Sans",sans-serif;">Line: 37  Col: 17</div>
<div class="t" style="left:100.00px;top:1848.93px;font-size:23px;color:#b0b0b0;font-weight:normal;font-style:normal;font-family:"Liberation Sans",sans-serif;">Filter</div>
<svg width="3024" height="1888" style="left:0;top:0"><path d="M2509.4 926.2 L2509.4 1012.6 L2499.1 1012.6 L2499.1 937.8 L2475.9 953.7 L2475.9 943 L2499.1 926.2 Z" fill="#000"/><rect x="2584.7" y="958" width="59.3" height="9.9" fill="#000"/><rect x="2584.7" y="987.7" width="59.3" height="9.5" fill="#000"/></svg>
<div class="t" style="left:2534.10px;top:901.08px;font-size:58.5px;color:#000;font-weight:normal;font-style:normal;font-family:"Liberation Sans",sans-serif;">2</div>
<div class="t" style="left:2661.30px;top:906.27px;font-size:127.5px;color:#000;font-weight:normal;font-style:normal;font-family:"Liberation Sans",sans-serif;">25</div>
</div></body></html>
